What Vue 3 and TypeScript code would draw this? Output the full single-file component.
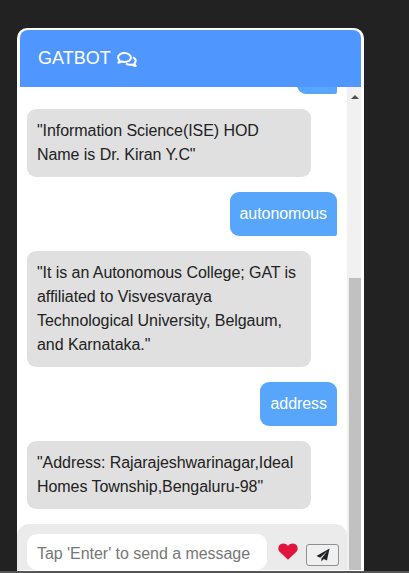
<script setup lang="ts">
interface Message {
  from: 'bot' | 'user';
  text: string;
}

// the first bubble is scrolled away under the header, only its bottom edge shows
const messages: Message[] = [
  { from: 'user', text: '' },
  { from: 'bot', text: '"Information Science(ISE) HOD Name is Dr. Kiran Y.C"' },
  { from: 'user', text: 'autonomous' },
  {
    from: 'bot',
    text: '"It is an Autonomous College; GAT is affiliated to Visvesvaraya Technological University, Belgaum, and Karnataka."',
  },
  { from: 'user', text: 'address' },
  { from: 'bot', text: '"Address: Rajarajeshwarinagar,Ideal Homes Township,Bengaluru-98"' },
];
</script>

<template>
  <div class="page">
    <div class="card">
      <!-- Header -->
      <div class="header">
        <span>GATBOT</span>
        <svg class="chat-icon" viewBox="0 0 20 16" width="20" height="16">
          <path
            d="M7.500 1.100C3.900 1.100 1.100 3.100 1.100 5.600c0 1.100.6 2.200 1.500 3-.2.8-.6 1.500-1.200 2.100 1.200-.1 2.300-.5 3.100-1.200.9.3 1.900.5 3 .5 3.600 0 6.400-2 6.400-4.400s-2.800-4.500-6.400-4.500z"
            fill="none"
            stroke="currentColor"
            stroke-width="2"
            stroke-linejoin="round"
          />
          <path
            d="M15.800 5.400c1.700.7 2.900 1.900 2.900 3.400 0 1-.5 2-1.400 2.700.2.900.7 1.700 1.400 2.400-1.400 0-2.700-.5-3.600-1.400-.7.2-1.400.3-2.100.3-1.600 0-3-.5-4.100-1.200"
            fill="none"
            stroke="currentColor"
            stroke-width="2"
            stroke-linejoin="round"
          />
        </svg>
      </div>

      <div class="body">
        <div class="main">
          <!-- Messages -->
          <div class="messages">
            <div
              v-for="(message, i) in messages"
              :key="i"
              class="bubble"
              :class="message.from"
            >
              {{ message.text }}
            </div>
          </div>

          <!-- Input -->
          <div class="footer">
            <input class="input" type="text" placeholder="Tap 'Enter' to send a message" />
            <svg class="heart" viewBox="0 0 20 17" width="20" height="17">
              <path
                d="M10 16.800 1.900 9C-.5 6.700.1 2.900 2.500 1.300 5-.2 8 .6 10 2.900c2-2.300 5-3.100 7.500-1.600C19.900 2.900 20.500 6.700 18.100 9z"
                fill="#e2133d"
              />
            </svg>
            <button class="send" type="button">
              <svg viewBox="0 0 16 16" width="14" height="14">
                <path d="M15.500 .5 .5 9.200 4.800 11 13 3.500 6.200 12v3.500l2.600-2.800 3.700 1.500z" fill="#1f2326" />
              </svg>
            </button>
          </div>
        </div>

        <!-- Scrollbar -->
        <div class="scrollbar">
          <div class="arrow"></div>
          <div class="thumb"></div>
        </div>
      </div>
    </div>
    <div class="strip"></div>
  </div>
</template>

<style>
html,
body {
  margin: 0;
  background: #222;
}
</style>

<style scoped>
.page {
  height: 573px;
  display: flex;
  flex-direction: column;
  overflow: hidden;
  font-family: 'Liberation Sans', Arial, sans-serif;
}

.card {
  height: 543px;
  flex: none;
  margin: 28px 45px 0 17px;
  box-sizing: border-box;
  padding: 2px 3px 1px;
  display: flex;
  flex-direction: column;
  background: #fff;
  border-radius: 10px 10px 0 0;
  overflow: hidden;
}

.strip {
  height: 2px;
  flex: none;
  background: #555;
}

.header {
  height: 57px;
  flex: none;
  display: flex;
  align-items: center;
  gap: 6px;
  padding: 0 18px;
  background: #4f97ff;
  border-radius: 8px 8px 0 0;
  color: #fff;
  font-size: 18px;
}

.chat-icon {
  margin-top: 3px;
}

.body {
  flex: 1;
  min-height: 0;
  display: flex;
}

.main {
  flex: 1;
  min-width: 0;
  display: flex;
  flex-direction: column;
}

.messages {
  flex: 1;
  min-height: 0;
  overflow: hidden;
  display: flex;
  flex-direction: column;
  justify-content: flex-end;
  gap: 15px;
  padding: 0 10px 15px 7px;
}

.bubble {
  flex: none;
  box-sizing: border-box;
  padding: 10px;
  font-size: 16px;
  line-height: 24px;
  letter-spacing: -0.06px;
  border-radius: 9px;
}

.bot {
  width: 284px;
  background: #e0e0e0;
  color: #222;
}

.user {
  align-self: flex-end;
  min-width: 40px;
  min-height: 44px;
  background: #58a6fb;
  color: #fff;
  border-bottom-right-radius: 2px;
}

.footer {
  height: 46px;
  flex: none;
  display: flex;
  align-items: flex-end;
  box-sizing: border-box;
  padding-left: 10px;
  margin-left: -3px;
  background: #ebebeb;
  border-radius: 12px 12px 0 0;
}

.input {
  width: 240px;
  height: 36px;
  box-sizing: border-box;
  padding: 3px 10px 0;
  border: 0;
  outline: 0;
  border-radius: 10px;
  background: #fff;
  font: 16px 'Liberation Sans', Arial, sans-serif;
  letter-spacing: -0.04px;
  color: #222;
}

.input::placeholder {
  color: #777;
  opacity: 1;
}

.heart {
  flex: none;
  margin: 0 0 10px 11px;
}

.send {
  width: 33px;
  height: 22px;
  flex: none;
  margin: 0 0 4px 8px;
  padding: 0;
  display: flex;
  align-items: center;
  justify-content: center;
  background: #f0f0f0;
  border: 1px solid #8f8f8f;
  border-radius: 3px;
}

.scrollbar {
  width: 14px;
  flex: none;
  box-sizing: border-box;
  padding-left: 2px;
  display: flex;
  flex-direction: column;
  background: #f1f1f1;
}

.arrow {
  width: 0;
  height: 0;
  margin: 8px auto 0;
  border-left: 4px solid transparent;
  border-right: 4px solid transparent;
  border-bottom: 4px solid #505050;
}

.thumb {
  margin-top: auto;
  height: 292px;
  background: #c1c1c1;
}
</style>
